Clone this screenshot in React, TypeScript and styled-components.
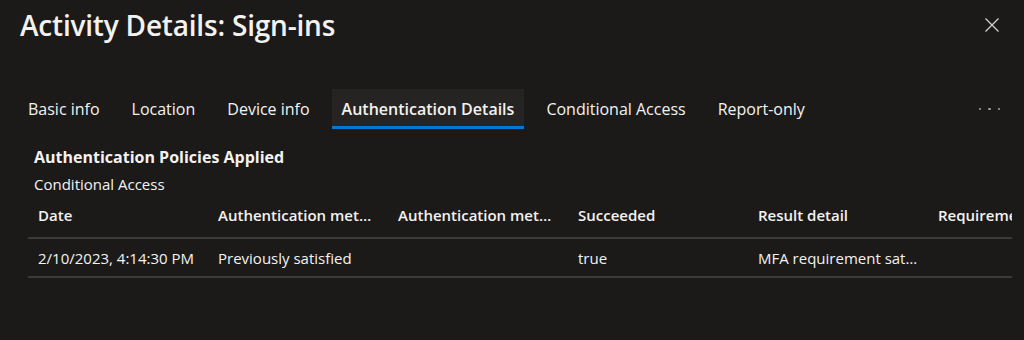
import React from 'react';
import styled, {createGlobalStyle} from 'styled-components';

const Global = createGlobalStyle`
    html, body {
        margin: 0;
        background: #1b1a19;
        color: #f3f2f1;
        font-family: "Open Sans", "Noto Sans", sans-serif;
    }
`;

const Panel = styled.div`
    width: 1024px;
    height: 340px;
    overflow: hidden;
    background: #1b1a19;
`;

const Header = styled.header`
    display: flex;
    justify-content: space-between;
    align-items: center;
    height: 50px;
    padding: 0 24px 0 20px;
`;

const Title = styled.h1`
    margin: 0;
    font-size: 28px;
    font-weight: 600;
    letter-spacing: -0.2px;
    color: #f3f2f1;
`;

const Close = styled.button`
    display: flex;
    background: none;
    border: 0;
    padding: 0;
    color: #d2d0ce;
    cursor: pointer;
`;

const Tabs = styled.nav`
    display: flex;
    align-items: stretch;
    gap: 12px;
    height: 40px;
    margin-top: 39px;
    padding: 0 20px 0 18px;
`;

const Tab = styled.div<{$active?: boolean}>`
    display: flex;
    align-items: center;
    padding: 3px 10px 0;
    font-size: 16px;
    font-weight: ${p => (p.$active ? 600 : 400)};
    color: #f3f2f1;
    background: ${p => (p.$active ? '#252423' : 'transparent')};
    border-bottom: 3px solid ${p => (p.$active ? '#0078d4' : 'transparent')};
`;

const More = styled.div`
    margin-left: auto;
    display: flex;
    align-items: center;
    gap: 7px;
    padding: 0 4px 0 0;
    span {
        width: 2.5px;
        height: 2.5px;
        border-radius: 50%;
        background: #a19f9d;
    }
`;

const Content = styled.section`
    padding: 17px 12px 0 28px;
`;

const Heading = styled.h2`
    margin: 0 0 0 6px;
    font-size: 16px;
    font-weight: 700;
    line-height: 22px;
`;

const Sub = styled.div`
    margin: 6px 0 0 6px;
    font-size: 15px;
    line-height: 20px;
`;

const Table = styled.div`
    overflow: hidden;
`;

const Row = styled.div<{$head?: boolean}>`
    display: grid;
    grid-template-columns: repeat(6, 180px);
    align-items: center;
    padding: ${p => (p.$head ? '11px 0 12px' : '9px 0 8px')};
    border-bottom: 2px solid #3b3a39;
    font-size: 15px;
    line-height: 20px;
    font-weight: ${p => (p.$head ? 600 : 400)};
`;

const Cell = styled.div`
    padding: 0 10px;
    white-space: nowrap;
    overflow: hidden;
    text-overflow: ellipsis;
`;

const tabs = ['Basic info', 'Location', 'Device info', 'Authentication Details', 'Conditional Access', 'Report-only'];
const cols = ['Date', 'Authentication method', 'Authentication method detail', 'Succeeded', 'Result detail', 'Requirement'];
const row = ['2/10/2023, 4:14:30 PM', 'Previously satisfied', '', 'true', 'MFA requirement satisfied by claim in the token', ''];

const App = () => {
    return (
        <React.Fragment>
            <Global />
            <Panel>
                <Header>
                    <Title>Activity Details: Sign-ins</Title>
                    <Close aria-label="Close">
                        <svg width="16" height="16" viewBox="0 0 16 16">
                            <path d="M1.5 1.5 L14.5 14.5 M14.5 1.5 L1.5 14.5" stroke="currentColor" strokeWidth="1.3" />
                        </svg>
                    </Close>
                </Header>
                <Tabs>
                    {tabs.map(t => (
                        <Tab key={t} $active={t === 'Authentication Details'}>{t}</Tab>
                    ))}
                    <More><span /><span /><span /></More>
                </Tabs>
                <Content>
                    <Heading>Authentication Policies Applied</Heading>
                    <Sub>Conditional Access</Sub>
                    <Table>
                        <Row $head>
                            {cols.map(c => <Cell key={c}>{c}</Cell>)}
                        </Row>
                        <Row>
                            {row.map((c, i) => <Cell key={i}>{c}</Cell>)}
                        </Row>
                    </Table>
                </Content>
            </Panel>
        </React.Fragment>
    );
};

export default App;
